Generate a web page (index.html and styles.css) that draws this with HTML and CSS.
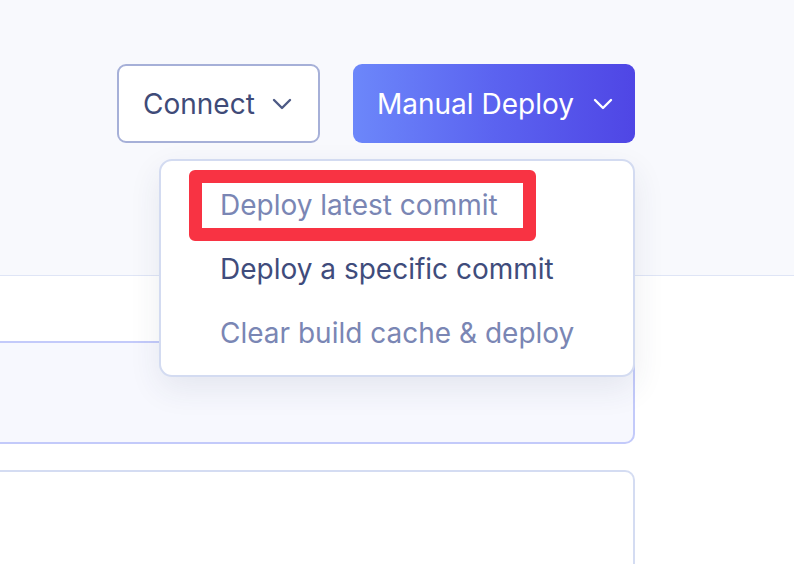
FILE: index.html
```html
<!DOCTYPE html>
<html lang="en">
<head>
  <meta charset="UTF-8">
  <meta name="viewport" content="width=device-width, initial-scale=1.0">
  <title>Manual Deploy</title>
  <link rel="stylesheet" href="styles.css">
</head>
<body>
  <header class="page-header">
    <div class="header-inner">
      <div class="actions">
        <button class="btn btn-outline" type="button">
          Connect
          <svg class="chevron" viewBox="0 0 20 12" width="20" height="12"><path d="M2 2l8 8 8-8" /></svg>
        </button>
        <div class="deploy-wrap">
          <button class="btn btn-primary" type="button">
            Manual Deploy
            <svg class="chevron" viewBox="0 0 20 12" width="20" height="12"><path d="M2 2l8 8 8-8" /></svg>
          </button>
          <ul class="dropdown">
            <li class="dropdown-item muted">Deploy latest commit</li>
            <li class="dropdown-item">Deploy a specific commit</li>
            <li class="dropdown-item muted">Clear build cache &amp; deploy</li>
            <span class="highlight"></span>
          </ul>
        </div>
      </div>
    </div>
  </header>

  <main class="content">
    <div class="spacer"></div>
    <section class="card card-active"></section>
    <section class="card card-plain"></section>
  </main>
</body>
</html>
```

FILE: styles.css
```css
body {
  margin: 0;
  font-family: Inter, "Noto Sans", sans-serif;
  background-color: #fff;
  height: 564px;
  overflow: hidden;
}
.page-header {
  background-color: #f8f9fd;
  border-bottom: 1px solid #dfe5f6;
  height: 275px;
}
.header-inner {
  padding: 64px 159px 0 0;
}
.actions {
  display: flex;
  justify-content: flex-end;
  gap: 33px;
}
.btn {
  display: flex;
  align-items: center;
  height: 79px;
  padding-top: 2px;
  border-radius: 9px;
  font-family: inherit;
  font-size: 28px;
  box-sizing: border-box;
  cursor: pointer;
}
.btn .chevron {
  fill: none;
  stroke-width: 2.4;
  stroke-linecap: round;
  stroke-linejoin: round;
}
.btn-outline {
  width: 203px;
  padding-left: 24px;
  gap: 17px;
  background-color: #fff;
  color: #3f4b78;
  border: 2px solid #a6b0d8;
}
.btn-outline .chevron {
  stroke: #4d5a85;
}
.btn-primary {
  width: 282px;
  padding-left: 24px;
  gap: 19px;
  color: #fff;
  border: none;
  background: linear-gradient(90deg, #6c87fa 0%, #5b63f0 50%, #4f46e5 100%);
}
.btn-primary .chevron {
  stroke: #fff;
}
.deploy-wrap {
  position: relative;
}
.dropdown {
  position: absolute;
  top: 95px;
  right: 0;
  width: 476px;
  height: 218px;
  box-sizing: border-box;
  margin: 0;
  padding: 12px 0 14px;
  list-style: none;
  background-color: #fff;
  border: 2px solid #d3dbf1;
  border-radius: 13px;
  box-shadow: 0 12px 32px rgba(40, 50, 90, 0.09);
  z-index: 2;
}
.dropdown-item {
  height: 64px;
  line-height: 64px;
  padding-left: 59px;
  font-size: 28px;
  color: #3f4c7c;
}
.dropdown-item.muted {
  color: #7a86b4;
}
.highlight {
  position: absolute;
  left: 28px;
  top: 9px;
  width: 347px;
  height: 71px;
  box-sizing: border-box;
  border: 13px solid #f83343;
  border-radius: 6px;
}
.content {
  padding-right: 159px;
  margin-left: -20px;
}
.spacer {
  height: 65px;
}
.card {
  border-radius: 10px;
  box-sizing: border-box;
}
.card-active {
  height: 103px;
  background-color: #f7f8fe;
  border: 2px solid #c3cafa;
}
.card-plain {
  margin-top: 26px;
  height: 94px;
  background-color: #fff;
  border: 2px solid #d4dcf2;
  border-bottom: none;
  border-radius: 10px 10px 0 0;
}
```
